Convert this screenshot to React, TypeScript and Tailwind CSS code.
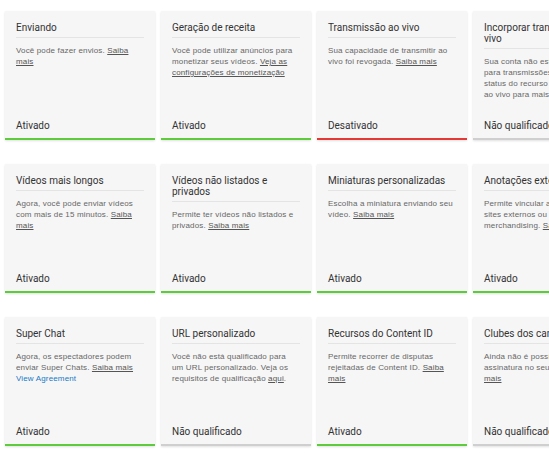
import React from "react";

type Status = "on" | "off" | "na";

interface Card {
  title: string;
  desc: React.ReactNode;
  status: Status;
}

const L = ({ children }: { children: React.ReactNode }) => (
  <a className="text-[#555] underline cursor-pointer">{children}</a>
);

const cards: Card[] = [
  { title: "Enviando", desc: <>Você pode fazer envios. <L>Saiba mais</L></>, status: "on" },
  {
    title: "Geração de receita",
    desc: (
      <>
        Você pode utilizar anúncios para monetizar seus vídeos. <L>Veja as configurações de monetização</L>
      </>
    ),
    status: "on",
  },
  {
    title: "Transmissão ao vivo",
    desc: <>Sua capacidade de transmitir ao vivo foi revogada. <L>Saiba mais</L></>,
    status: "off",
  },
  {
    title: "Incorporar transmissões ao vivo",
    desc: (
      <>
        Sua conta não está qualificada
        <br />
        para transmissões incorporadas.
        <br />
        status do recurso de transmissão
        <br />
        ao vivo para mais informações.
      </>
    ),
    status: "na",
  },
  {
    title: "Vídeos mais longos",
    desc: <>Agora, você pode enviar vídeos com mais de 15 minutos. <L>Saiba mais</L></>,
    status: "on",
  },
  {
    title: "Vídeos não listados e privados",
    desc: <>Permite ter vídeos não listados e privados. <L>Saiba mais</L></>,
    status: "on",
  },
  {
    title: "Miniaturas personalizadas",
    desc: <>Escolha a miniatura enviando seu vídeo. <L>Saiba mais</L></>,
    status: "on",
  },
  {
    title: "Anotações externas",
    desc: (
      <>
        Permite vincular anotações a
        <br />
        sites externos ou de
        <br />
        merchandising. <L>Saiba mais</L>
      </>
    ),
    status: "on",
  },
  {
    title: "Super Chat",
    desc: (
      <>
        Agora, os espectadores podem enviar Super Chats. <L>Saiba mais</L>
        <br />
        <a className="text-[#167ac6] cursor-pointer">View Agreement</a>
      </>
    ),
    status: "on",
  },
  {
    title: "URL personalizado",
    desc: <>Você não está qualificado para um URL personalizado. Veja os requisitos de qualificação <L>aqui</L>.</>,
    status: "na",
  },
  {
    title: "Recursos do Content ID",
    desc: <>Permite recorrer de disputas rejeitadas de Content ID. <L>Saiba mais</L></>,
    status: "on",
  },
  {
    title: "Clubes dos canais",
    desc: (
      <>
        Ainda não é possível oferecer
        <br />
        assinatura no seu canal. Saiba
        <br />
        <L>mais</L>
      </>
    ),
    status: "na",
  },
];

const statusLabel: Record<Status, string> = {
  on: "Ativado",
  off: "Desativado",
  na: "Não qualificado",
};

const borderCls: Record<Status, string> = {
  on: "border-b-[#5dcb3c]",
  off: "border-b-[#e53935]",
  na: "border-b-[#cfcfcf]",
};

export default function App() {
  return (
    <div className="w-[549px] h-[467px] overflow-hidden bg-white">
      <div className="grid grid-cols-[repeat(4,150px)] gap-x-[6px] gap-y-[24px] pl-[5px] pt-[11px] w-[700px]">
        {cards.map((c, i) => (
          <div
            key={i}
            className={`flex flex-col h-[129px] bg-[#f6f6f6] border-b-2 ${borderCls[c.status]} shadow-[0_1px_2px_rgba(0,0,0,0.12)] px-[11px] pt-[11px] pb-[7px]`}
          >
            <div
              className="text-[10px] leading-[11px] text-[#333] pb-[4px] border-b border-b-[#e4e4e4]"
              style={{ fontFamily: "Roboto, 'Liberation Sans', sans-serif" }}
            >
              {c.title}
            </div>
            <div
              className="mt-[7px] pr-[2px] text-[8px] leading-[11px] tracking-[0.15px] text-[#666]"
              style={{ fontFamily: "'Liberation Sans', Arial, sans-serif" }}
            >
              {c.desc}
            </div>
            <div
              className="mt-auto text-[10px] leading-[11px] text-[#333]"
              style={{ fontFamily: "Roboto, 'Liberation Sans', sans-serif" }}
            >
              {statusLabel[c.status]}
            </div>
          </div>
        ))}
      </div>
    </div>
  );
}
